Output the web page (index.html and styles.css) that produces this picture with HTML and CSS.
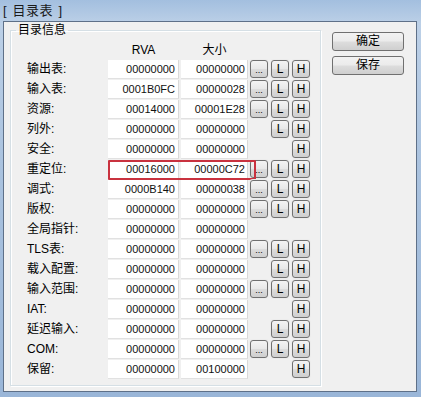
FILE: index.html
```html
<!DOCTYPE html>
<html>
<head>
<meta charset="utf-8">
<link rel="stylesheet" href="styles.css">
</head>
<body>
<div class="window">
  <div class="title">[ 目录表 ]</div>
  <div class="client">
    <fieldset class="group">
      <legend>目录信息</legend>
      <div class="head"><span class="lbl"></span><span class="hcol c1">RVA</span><span class="hcol c2">大小</span></div>
      <div class="row"><span class="lbl">输出表:</span><span class="fld c1">00000000</span><span class="fld c2">00000000</span><span class="btn dots">...</span><span class="btn">L</span><span class="btn">H</span></div>
      <div class="row"><span class="lbl">输入表:</span><span class="fld c1">0001B0FC</span><span class="fld c2">00000028</span><span class="btn dots">...</span><span class="btn">L</span><span class="btn">H</span></div>
      <div class="row"><span class="lbl">资源:</span><span class="fld c1">00014000</span><span class="fld c2">00001E28</span><span class="btn dots">...</span><span class="btn">L</span><span class="btn">H</span></div>
      <div class="row"><span class="lbl">列外:</span><span class="fld c1">00000000</span><span class="fld c2">00000000</span><span class="gap"></span><span class="btn">L</span><span class="btn">H</span></div>
      <div class="row"><span class="lbl">安全:</span><span class="fld c1">00000000</span><span class="fld c2">00000000</span><span class="gap"></span><span class="gap"></span><span class="btn">H</span></div>
      <div class="row hl"><span class="lbl">重定位:</span><span class="fld c1">00016000</span><span class="fld c2">00000C72</span><span class="btn dots">...</span><span class="btn">L</span><span class="btn">H</span><span class="mark"></span></div>
      <div class="row"><span class="lbl">调式:</span><span class="fld c1">0000B140</span><span class="fld c2">00000038</span><span class="btn dots">...</span><span class="btn">L</span><span class="btn">H</span></div>
      <div class="row"><span class="lbl">版权:</span><span class="fld c1">00000000</span><span class="fld c2">00000000</span><span class="btn dots">...</span><span class="btn">L</span><span class="btn">H</span></div>
      <div class="row"><span class="lbl">全局指针:</span><span class="fld c1">00000000</span><span class="fld c2">00000000</span></div>
      <div class="row"><span class="lbl">TLS表:</span><span class="fld c1">00000000</span><span class="fld c2">00000000</span><span class="btn dots">...</span><span class="btn">L</span><span class="btn">H</span></div>
      <div class="row"><span class="lbl">载入配置:</span><span class="fld c1">00000000</span><span class="fld c2">00000000</span><span class="gap"></span><span class="btn">L</span><span class="btn">H</span></div>
      <div class="row"><span class="lbl">输入范围:</span><span class="fld c1">00000000</span><span class="fld c2">00000000</span><span class="btn dots">...</span><span class="btn">L</span><span class="btn">H</span></div>
      <div class="row"><span class="lbl">IAT:</span><span class="fld c1">00000000</span><span class="fld c2">00000000</span><span class="gap"></span><span class="gap"></span><span class="btn">H</span></div>
      <div class="row"><span class="lbl">延迟输入:</span><span class="fld c1">00000000</span><span class="fld c2">00000000</span><span class="gap"></span><span class="btn">L</span><span class="btn">H</span></div>
      <div class="row"><span class="lbl">COM:</span><span class="fld c1">00000000</span><span class="fld c2">00000000</span><span class="btn dots">...</span><span class="btn">L</span><span class="btn">H</span></div>
      <div class="row"><span class="lbl">保留:</span><span class="fld c1">00000000</span><span class="fld c2">00100000</span><span class="gap"></span><span class="gap"></span><span class="btn">H</span></div>
    </fieldset>
    <div class="side">
      <div class="pbtn">确定</div>
      <div class="pbtn">保存</div>
    </div>
  </div>
</div>
</body>
</html>
```

FILE: styles.css
```css
html, body {
  margin: 0;
  padding: 0;
}
body {
  width: 421px;
  height: 397px;
  overflow: hidden;
  font-family: "Liberation Sans", "Noto Sans CJK SC", sans-serif;
  font-size: 12px;
  color: #000;
}
.window {
  width: 421px;
  height: 397px;
  box-sizing: border-box;
  background: linear-gradient(180deg, #a3bfdf 0%, #bcd0e7 6%, #abc3df 40%, #9ab6d8 100%);
  padding: 0 4px 0 3px;
}
.title {
  height: 21px;
  line-height: 21px;
  font-size: 13px;
  color: #1a1a1a;
  letter-spacing: 0.6px;
  word-spacing: 1px;
}
.client {
  height: 371px;
  box-sizing: border-box;
  border: 1px solid #5e7088;
  background: #f0f0f0;
  display: flex;
  align-items: flex-start;
}
.group {
  margin: 1px 0 0 6px;
  padding: 0 9px 5px 16px;
  width: 311px;
  box-sizing: border-box;
  border: 1px solid #d5dfe5;
  box-shadow: inset 1px 1px 0 #ffffff, 1px 1px 0 #ffffff;
  min-width: 0;
}
.group legend {
  margin-left: -11px;
  padding: 0 2px;
  line-height: 14px;
  font-size: 12px;
}
.head {
  height: 23px;
  display: flex;
  align-items: center;
}
.row {
  height: 20px;
  display: flex;
  align-items: flex-start;
  position: relative;
}
.lbl {
  width: 81px;
  flex: none;
  line-height: 19px;
  white-space: nowrap;
}
.hcol {
  text-align: center;
  line-height: 16px;
  padding-top: 2px;
}
.fld {
  height: 19px;
  box-sizing: border-box;
  background: #fff;
  border-right: 1px solid #d9d9d9;
  border-bottom: 1px solid #e1e1e1;
  text-align: right;
  line-height: 19px;
  font-size: 11px;
  color: #111;
  flex: none;
}
.c1 {
  width: 71px;
  padding-right: 3px;
  margin-right: 2px;
}
.c2 {
  width: 67px;
  padding-right: 2px;
  margin-right: 2px;
}
.hcol.c1, .hcol.c2 {
  padding-right: 0;
}
.btn, .gap {
  width: 18px;
  height: 18px;
  margin-right: 3px;
  flex: none;
  box-sizing: border-box;
}
.btn {
  border: 1px solid #707070;
  border-radius: 3px;
  background: linear-gradient(180deg, #f4f4f4 0%, #e8e8e8 48%, #dcdcdc 52%, #cfcfcf 100%);
  text-align: center;
  line-height: 16px;
  font-size: 12px;
  box-shadow: 0 0 0 1px #ececec;
}
.btn.dots {
  font-size: 9px;
  line-height: 18px;
}
.mark {
  position: absolute;
  left: 81px;
  top: 0;
  width: 148px;
  height: 20px;
  box-sizing: border-box;
  border: 2px solid #c9323f;
  border-radius: 1px;
}
.side {
  margin: 10px 0 0 11px;
  display: flex;
  flex-direction: column;
  gap: 5px;
}
.pbtn {
  width: 72px;
  height: 19px;
  box-sizing: border-box;
  border: 1px solid #707070;
  border-radius: 3px;
  background: linear-gradient(180deg, #f2f2f2 0%, #ebebeb 48%, #dddddd 52%, #cfcfcf 100%);
  text-align: center;
  line-height: 17px;
  font-size: 12px;
}
```
